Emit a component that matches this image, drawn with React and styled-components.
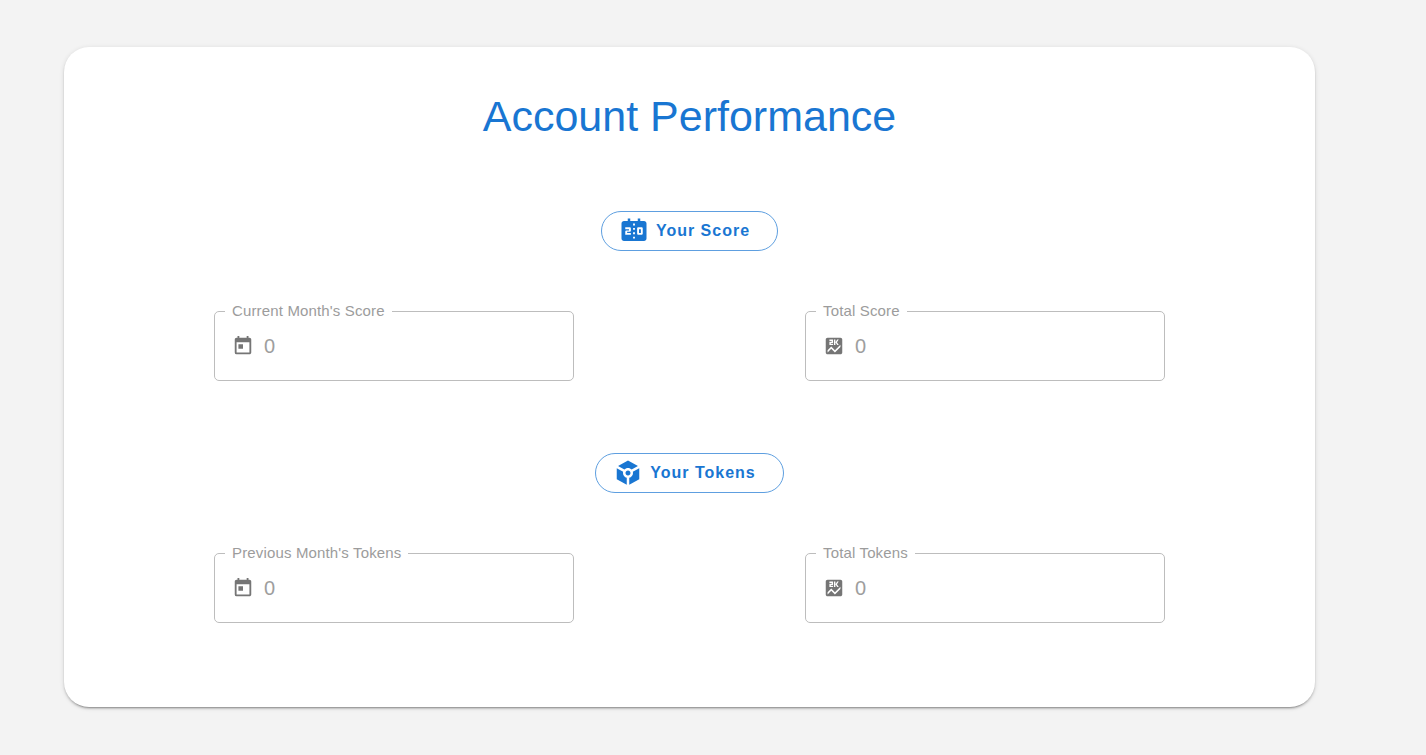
import React from "react";
import styled, { createGlobalStyle } from "styled-components";
import { MdScore, MdScoreboard, MdToday, MdToken } from "react-icons/md";

const GlobalStyle = createGlobalStyle`
  *, *::before, *::after { box-sizing: border-box; }
  body {
    margin: 0;
    background: #f3f3f3;
    font-family: "Liberation Sans", Arial, Helvetica, sans-serif;
  }
`;

const Page = styled.main`
  display: flow-root;
  min-height: 100vh;
`;

const Card = styled.section`
  display: flex;
  flex-direction: column;
  align-items: center;
  margin: 47px 111px 47px 64px;
  padding: 44px 150px 84px;
  background: #fff;
  border-radius: 25px;
  box-shadow:
    0 3px 1px -2px rgba(0, 0, 0, 0.2),
    0 2px 2px 0 rgba(0, 0, 0, 0.14),
    0 1px 5px 0 rgba(0, 0, 0, 0.12);
`;

const Title = styled.h1`
  margin: 0 0 70px;
  color: #1976d2;
  font-size: 43px;
  font-weight: 400;
  line-height: 50px;
  text-align: center;
`;

const Group = styled.div`
  display: flex;
  flex-direction: column;
  align-items: center;
  width: 100%;

  & + & {
    margin-top: 72px;
  }
`;

const PillButton = styled.button`
  display: flex;
  align-items: center;
  gap: 7px;
  height: 40px;
  margin-bottom: 50px;
  padding: 0 27px 0 17px;
  border: 1px solid #5e9fe0;
  border-radius: 20px;
  background: transparent;
  color: #1976d2;
  font-family: inherit;
  font-size: 16px;
  font-weight: 700;
  letter-spacing: 1px;
  white-space: nowrap;
  cursor: pointer;

  svg {
    width: 30px;
    height: 30px;
  }
`;

const FieldRow = styled.div`
  display: flex;
  justify-content: space-between;
  gap: 24px;
  width: 100%;
`;

const Outline = styled.fieldset`
  flex: 0 1 360px;
  min-width: 0;
  height: 80px;
  margin: 0;
  padding: 0 17px 0 10px;
  border: 1px solid #bdbdbd;
  border-radius: 5px;
`;

const Legend = styled.legend`
  padding: 0 7px;
  color: #9c9c9c;
  font-size: 15px;
  line-height: 20px;
  letter-spacing: 0.01em;
`;

const InputLine = styled.div`
  display: flex;
  align-items: center;
  gap: 10px;
  height: 50px;
  padding-left: 7px;
  color: #757575;

  svg {
    flex: none;
    width: 22px;
    height: 22px;
  }
`;

const ValueInput = styled.input`
  flex: 1;
  min-width: 0;
  padding: 0;
  border: 0;
  outline: 0;
  background: transparent;
  color: #9e9e9e;
  font-family: inherit;
  font-size: 20px;
  line-height: 24px;
`;

function StatField({ id, label, icon: Icon, value }) {
  return (
    <Outline>
      <Legend>
        <label htmlFor={id}>{label}</label>
      </Legend>
      <InputLine>
        <Icon aria-hidden="true" />
        <ValueInput id={id} type="text" value={value} disabled />
      </InputLine>
    </Outline>
  );
}

export default function App() {
  return (
    <Page>
      <GlobalStyle />
      <Card>
        <Title>Account Performance</Title>
        <Group>
          <PillButton type="button">
            <MdScoreboard aria-hidden="true" />
            Your Score
          </PillButton>
          <FieldRow>
            <StatField id="month-score" label="Current Month's Score" icon={MdToday} value="0" />
            <StatField id="total-score" label="Total Score" icon={MdScore} value="0" />
          </FieldRow>
        </Group>
        <Group>
          <PillButton type="button">
            <MdToken aria-hidden="true" />
            Your Tokens
          </PillButton>
          <FieldRow>
            <StatField id="month-tokens" label="Previous Month's Tokens" icon={MdToday} value="0" />
            <StatField id="total-tokens" label="Total Tokens" icon={MdScore} value="0" />
          </FieldRow>
        </Group>
      </Card>
    </Page>
  );
}
